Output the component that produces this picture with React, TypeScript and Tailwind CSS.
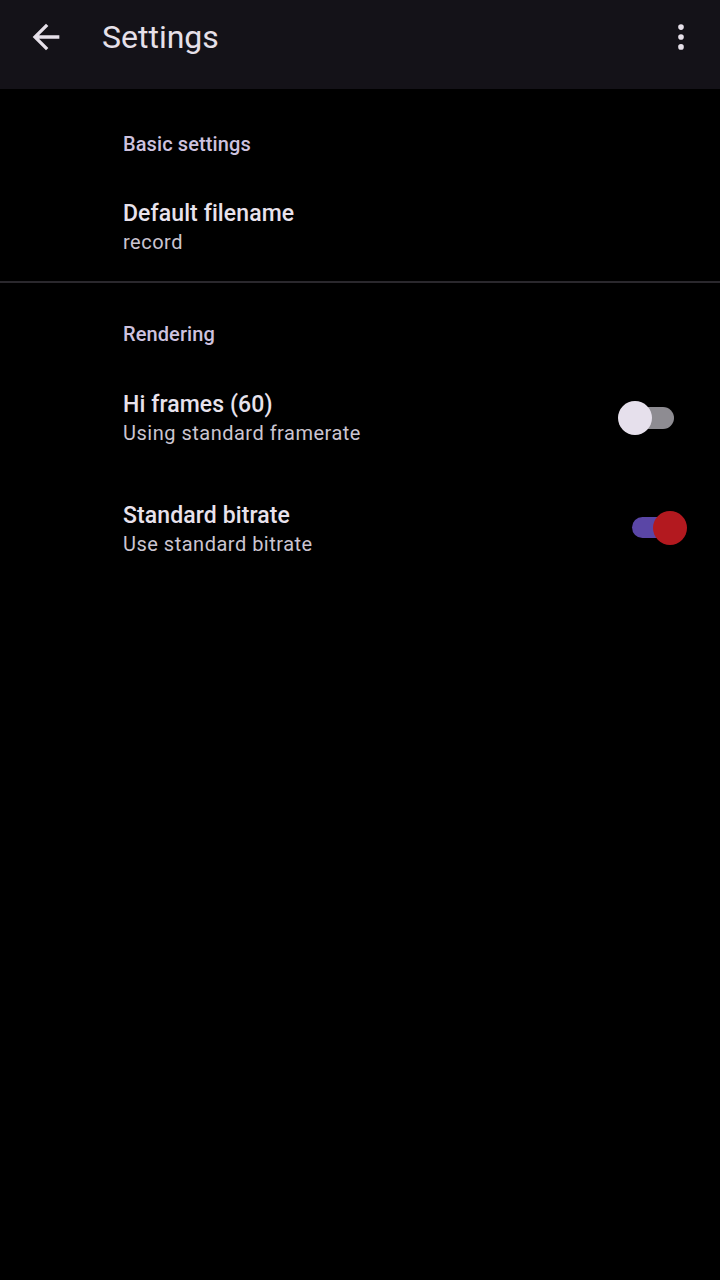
import { useState } from 'react'

function Toggle({ on, onClick }: { on: boolean; onClick: () => void }) {
  if (on) {
    return (
      <button onClick={onClick} className="relative h-[36px] w-[60px] shrink-0">
        <span className="absolute left-[4px] top-[6px] h-[21px] w-[48px] rounded-full bg-[#5a46a6]" />
        <span className="absolute left-[25px] top-[0px] h-[34px] w-[34px] rounded-full bg-[#b3191f]" />
      </button>
    )
  }
  return (
    <button onClick={onClick} className="relative h-[36px] w-[60px] shrink-0">
      <span className="absolute left-[-2px] top-[7px] h-[22px] w-[48px] rounded-full bg-[#8e8c92]" />
      <span className="absolute left-[-10px] top-[1px] h-[34px] w-[34px] rounded-full bg-[#e6e0ec]" />
    </button>
  )
}

function Category({ title }: { title: string }) {
  return (
    <div className="pl-[123px] text-[20px] font-medium leading-[26px] tracking-[0.1px] text-[#cdc2df]">
      {title}
    </div>
  )
}

function Pref({
  title,
  summary,
  toggle,
}: {
  title: string
  summary: string
  toggle?: React.ReactNode
}) {
  return (
    <div className="flex items-center pl-[123px] pr-[32px]">
      <div className="flex-1">
        <div className="text-[23px] font-medium leading-[30px] tracking-[0.1px] text-[#e8e2ec]">{title}</div>
        <div className="text-[20px] leading-[26px] tracking-[0.5px] text-[#cbc5d1]">{summary}</div>
      </div>
      {toggle}
    </div>
  )
}

export default function App() {
  const [hiFrames, setHiFrames] = useState(false)
  const [stdBitrate, setStdBitrate] = useState(true)

  return (
    <div className="min-h-[1280px] bg-black" style={{ fontFamily: 'Roboto, "Noto Sans", sans-serif' }}>
      <header className="h-[89px] bg-[#141218]">
        <div className="flex h-[73px] items-center pl-[26px] pr-[21px]">
          <button className="flex h-[40px] w-[40px] items-center justify-center text-[#e6e0e9]">
            <svg width="40" height="40" viewBox="0 0 24 24" fill="currentColor">
              <path d="M20 11H7.83l5.59-5.59L12 4l-8 8 8 8 1.41-1.41L7.83 13H20v-2z" />
            </svg>
          </button>
          <h1 className="ml-[36px] flex-1 text-[32px] leading-[38px] text-[#e6e0e9]">Settings</h1>
          <button className="flex h-[36px] w-[36px] items-center justify-center text-[#e6e0e9]">
            <svg width="34" height="34" viewBox="0 0 24 24" fill="currentColor">
              <circle cx="12" cy="5" r="2" />
              <circle cx="12" cy="12" r="2" />
              <circle cx="12" cy="19" r="2" />
            </svg>
          </button>
        </div>
      </header>

      <div className="pt-[42px]">
        <Category title="Basic settings" />
        <div className="mt-[42px]">
          <Pref title="Default filename" summary="record" />
        </div>
        <div className="mt-[26px] h-[2px] bg-[#2a282d]" />
        <div className="mt-[38px]">
          <Category title="Rendering" />
        </div>
        <div className="mt-[43px]">
          <Pref
            title="Hi frames (60)"
            summary="Using standard framerate"
            toggle={<Toggle on={hiFrames} onClick={() => setHiFrames(!hiFrames)} />}
          />
        </div>
        <div className="mt-[55px]">
          <Pref
            title="Standard bitrate"
            summary="Use standard bitrate"
            toggle={<Toggle on={stdBitrate} onClick={() => setStdBitrate(!stdBitrate)} />}
          />
        </div>
      </div>
    </div>
  )
}
